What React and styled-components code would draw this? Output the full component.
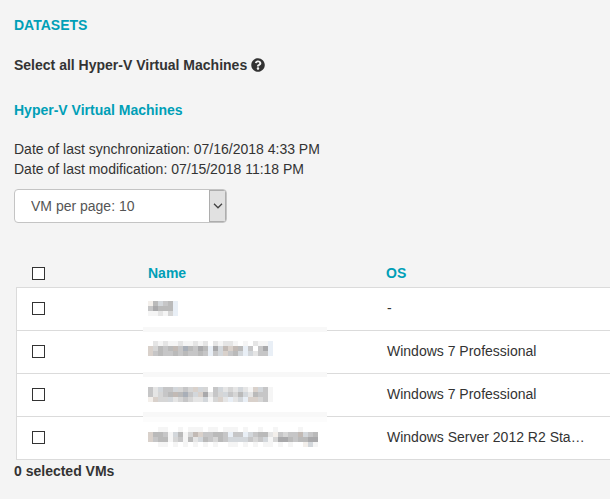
import React from "react";
import styled, { createGlobalStyle } from "styled-components";
import { FaQuestionCircle } from "react-icons/fa";

const GlobalStyle = createGlobalStyle`
  * { box-sizing: border-box; }
  body {
    margin: 0;
    background: #f4f4f4;
    color: #333;
    font: 14px/20px "Liberation Sans", Arial, Helvetica, sans-serif;
  }
`;

const Page = styled.main`
  padding: 15px 0 15px 14px;
  overflow-x: hidden;
`;

const Heading = styled.h2`
  margin: 0;
  font-size: 14px;
  line-height: 20px;
  color: #009fb7;
`;

const SelectAll = styled.p`
  display: flex;
  align-items: center;
  gap: 4px;
  margin: 20px 0 25px;
  font-weight: bold;
`;

const HelpButton = styled.button`
  display: flex;
  padding: 0;
  border: 0;
  background: none;
  color: #333;
`;

const Dates = styled.div`
  margin: 19px 0 10px;
`;

const SelectBox = styled.div`
  position: relative;
  width: 213px;
  height: 34px;
  border: 1px solid #c4c4c4;
  border-radius: 4px;
  background: #fff;
  overflow: hidden;
`;

const Select = styled.select`
  width: 100%;
  height: 100%;
  padding: 0 20px 0 16px;
  border: 0;
  appearance: none;
  background: transparent;
  color: #555;
  font: inherit;
`;

const SelectArrow = styled.span`
  position: absolute;
  top: 0;
  right: 0;
  bottom: 0;
  display: flex;
  align-items: center;
  justify-content: center;
  width: 17px;
  border: 1px solid #adadad;
  background: #e1e1e1;
  pointer-events: none;
`;

const Table = styled.table`
  width: calc(100% - 2px);
  margin: 36px 0 0 2px;
  border-collapse: separate;
  border-spacing: 0;
  table-layout: fixed;
`;

const HeadCell = styled.th`
  width: ${(p) => p.$width || "auto"};
  height: 29px;
  padding: 0 0 0 ${(p) => p.$indent || "0"};
  border-bottom: 1px solid #dbdbdb;
  color: #009fb7;
  text-align: left;
  vertical-align: middle;
`;

const Cell = styled.td`
  position: relative;
  height: 43px;
  padding: 0 0 2px ${(p) => p.$indent || "0"};
  border-bottom: 1px solid #dbdbdb;
  border-left: ${(p) => (p.$first ? "1px solid #dbdbdb" : "0")};
  background: #fff;
  vertical-align: middle;
  white-space: nowrap;
`;

const Checkbox = styled.input`
  display: block;
  appearance: none;
  width: 13px;
  height: 13px;
  margin: 0;
  border: 1px solid #333;
  background: #fff;
  &:checked { background: #009fb7; }
`;

const Strip = styled.span`
  position: absolute;
  z-index: 1;
  left: -5px;
  bottom: ${(p) => p.$bottom};
  width: 184px;
  height: ${(p) => (p.$tail ? "10px" : "5px")};
  background: linear-gradient(#f8f8f8 5px, #fcfcfc 5px);
`;

const MosaicSvg = styled.svg`
  display: block;
`;

const Total = styled.p`
  margin: 1px 0 0;
  font-weight: bold;
`;

const SHADES = {
  a: "#a9a9ab",
  b: "#bababa",
  c: "#c6c6c7",
  d: "#d6d6d6",
  e: "#e5e5e5",
  f: "#f5f5f5",
  w: "#d9d1cb",
  k: "#c2bab5",
  u: "#a9afb8",
  s: "#d3d7db",
  v: "#e9eff6",
  x: "#f3efeb",
};

function Mosaic({ rows }) {
  const cell = 5;
  const cols = rows[0].length;
  return (
    <MosaicSvg
      width={cols * cell}
      height={rows.length * cell}
      shapeRendering="crispEdges"
      role="img"
      aria-label="Hidden name"
    >
      {rows.flatMap((row, y) =>
        [...row].map((shade, x) =>
          SHADES[shade] ? (
            <rect
              key={`${x}-${y}`}
              x={x * cell}
              y={y * cell}
              width={cell}
              height={cell}
              fill={SHADES[shade]}
            />
          ) : null
        )
      )}
    </MosaicSvg>
  );
}

const MACHINES = [
  { os: "-", strip: "-2px", name: ["xbscbv", "cabbbv", "ffefdv"] },
  {
    os: "Windows 7 Professional",
    strip: "-4px",
    name: [
      " efeffeffefe efeef f effe ",
      "wdbcbkcubcabvaskwkbvc cac",
      "wcbccbcbccbcvcswcbsvseccc",
      "                         ",
    ].map((row) => row.slice(0, 24) + (row.trim() ? "v" : " ")),
  },
  {
    os: "Windows 7 Professional",
    strip: "0",
    tail: true,
    name: [
      "cesccsdcdwsd csedeseefwscf",
      "cedcbkbucswaecdscdbscebccf",
      "xwddsedcdeesfdwevesvfwwdcf",
    ].map((row) => row.slice(0, 20) + row.slice(21)),
  },
  {
    os: "Windows Server 2012 R2 Sta\u2026",
    name: [
      "  ff  f fff ff fff f  f  f    f    ",
      "wbbcfsbfdkwccbbcvccvscbbexcdcckscb",
      "wcbbfdcfbesbcdbcsssscdcsfdaabcbbaa",
      "  ff f f f f f  ff f f ff f f  xsf",
    ],
  },
];

export default function App() {
  return (
    <>
      <GlobalStyle />
      <Page>
        <Heading>DATASETS</Heading>
        <SelectAll>
          Select all Hyper-V Virtual Machines
          <HelpButton type="button" aria-label="Help">
            <FaQuestionCircle size={14} />
          </HelpButton>
        </SelectAll>
        <Heading>Hyper-V Virtual Machines</Heading>
        <Dates>
          <div>Date of last synchronization: 07/16/2018 4:33 PM</div>
          <div>Date of last modification: 07/15/2018 11:18 PM</div>
        </Dates>
        <SelectBox>
          <Select aria-label="VM per page" defaultValue="10">
            <option value="10">VM per page: 10</option>
            <option value="25">VM per page: 25</option>
            <option value="50">VM per page: 50</option>
          </Select>
          <SelectArrow aria-hidden="true">
            <svg width="10" height="6" viewBox="0 0 10 6" fill="none" stroke="#444" strokeWidth="1.3">
              <path d="M1 0.8 L5 4.8 L9 0.8" />
            </svg>
          </SelectArrow>
        </SelectBox>
        <Table>
          <thead>
            <tr>
              <HeadCell $width="132px" $indent="16px">
                <Checkbox type="checkbox" aria-label="Select all rows" />
              </HeadCell>
              <HeadCell $width="238px">Name</HeadCell>
              <HeadCell>OS</HeadCell>
            </tr>
          </thead>
          <tbody>
            {MACHINES.map((vm, i) => (
              <tr key={i}>
                <Cell $first $indent="15px">
                  <Checkbox type="checkbox" aria-label={`Select machine ${i + 1}`} />
                </Cell>
                <Cell>
                  <Mosaic rows={vm.name} />
                  {vm.strip && <Strip $bottom={vm.tail ? "-6px" : vm.strip} $tail={vm.tail} />}
                </Cell>
                <Cell $indent="1px">{vm.os}</Cell>
              </tr>
            ))}
          </tbody>
        </Table>
        <Total>0 selected VMs</Total>
      </Page>
    </>
  );
}
